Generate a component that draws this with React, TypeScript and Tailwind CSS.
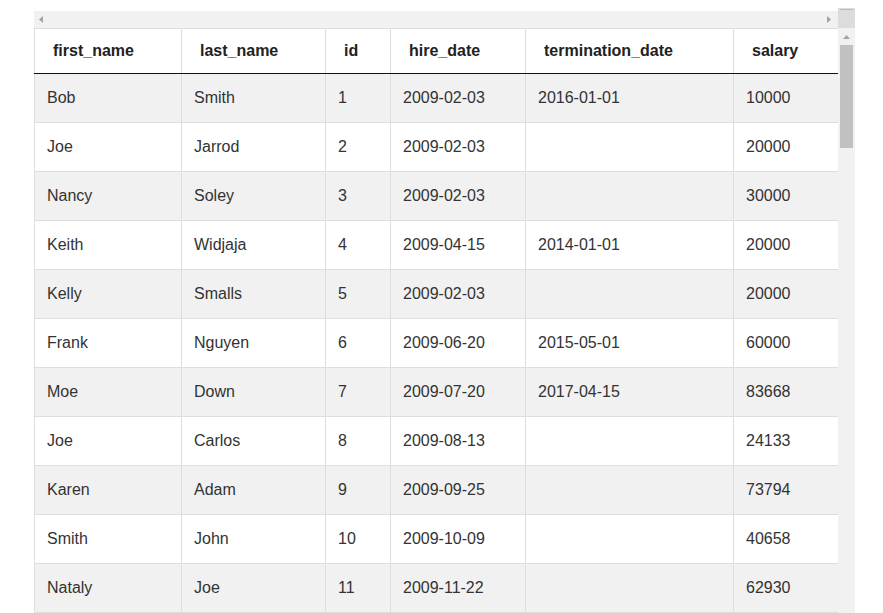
const columns = [
  { key: 'first_name', width: 'w-[147px]' },
  { key: 'last_name', width: 'w-[144px]' },
  { key: 'id', width: 'w-[65px]' },
  { key: 'hire_date', width: 'w-[135px]' },
  { key: 'termination_date', width: 'w-[208px]' },
  { key: 'salary', width: 'w-[105px]' },
];

const rows: string[][] = [
  ['Bob', 'Smith', '1', '2009-02-03', '2016-01-01', '10000'],
  ['Joe', 'Jarrod', '2', '2009-02-03', '', '20000'],
  ['Nancy', 'Soley', '3', '2009-02-03', '', '30000'],
  ['Keith', 'Widjaja', '4', '2009-04-15', '2014-01-01', '20000'],
  ['Kelly', 'Smalls', '5', '2009-02-03', '', '20000'],
  ['Frank', 'Nguyen', '6', '2009-06-20', '2015-05-01', '60000'],
  ['Moe', 'Down', '7', '2009-07-20', '2017-04-15', '83668'],
  ['Joe', 'Carlos', '8', '2009-08-13', '', '24133'],
  ['Karen', 'Adam', '9', '2009-09-25', '', '73794'],
  ['Smith', 'John', '10', '2009-10-09', '', '40658'],
  ['Nataly', 'Joe', '11', '2009-11-22', '', '62930'],
];

// ─── scrollbar bits ────────────────────────────────────────────

function Arrow({ dir }: { dir: 'left' | 'right' | 'up' }) {
  const points =
    dir === 'left' ? '4,0 4,7 0,3.5' : dir === 'right' ? '0,0 0,7 4,3.5' : '0,4 7,4 3.5,0';
  const size = dir === 'up' ? { w: 7, h: 4 } : { w: 4, h: 7 };
  return (
    <svg width={size.w} height={size.h} viewBox={`0 0 ${size.w} ${size.h}`}>
      <polygon points={points} fill="#a3a3a3" />
    </svg>
  );
}

function HorizontalBar() {
  return (
    <div className="flex h-[17px] items-center justify-between bg-[#f1f1f1] pl-[5px] pr-[7px]">
      <Arrow dir="left" />
      <Arrow dir="right" />
    </div>
  );
}

function VerticalBar() {
  return (
    <div className="flex w-[17px] flex-col">
      <div className="h-[20px] bg-[#dcdcdc] px-[2px] pt-[1px]">
        <div className="h-[1px] bg-[#bdbdbd]" />
      </div>
      <div className="flex flex-1 flex-col items-center bg-[#f1f1f1] pt-[7px]">
        <Arrow dir="up" />
        <div className="mt-[6px] h-[103px] w-[13px] bg-[#c1c1c1]" />
      </div>
    </div>
  );
}

export default function App() {
  return (
    <div
      className="flex h-[613px] overflow-hidden bg-white pl-[34px] pt-[8px] text-[16px]"
      style={{ fontFamily: '"Liberation Sans", Arial, sans-serif' }}
    >
      <div className="flex w-[804px] flex-col pt-[3px]">
        <HorizontalBar />
        <table className="w-[804px] table-fixed border-collapse">
          <thead>
            <tr className="h-[45px]">
              {columns.map((c) => (
                <th
                  key={c.key}
                  className={`${c.width} border border-[#dedede] border-b-[#111] pl-[18px] text-left font-bold text-[#222]`}
                >
                  {c.key}
                </th>
              ))}
            </tr>
          </thead>
          <tbody>
            {rows.map((r, i) => (
              <tr key={i} className={i % 2 === 0 ? 'h-[49px] bg-[#f1f1f1]' : 'h-[49px] bg-white'}>
                {r.map((v, j) => (
                  <td key={j} className="border border-[#dedede] pl-[12px] text-[#333]">
                    {v}
                  </td>
                ))}
              </tr>
            ))}
          </tbody>
        </table>
      </div>
      <VerticalBar />
    </div>
  );
}
